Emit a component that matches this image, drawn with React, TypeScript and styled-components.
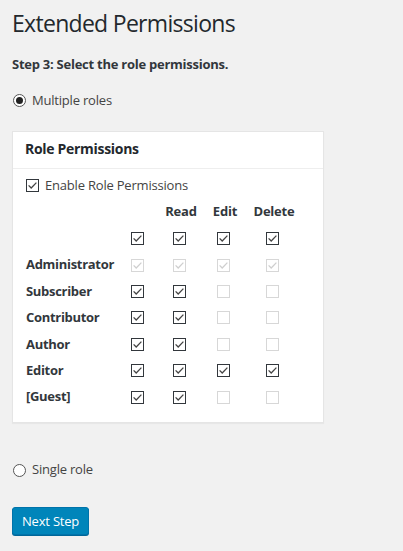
import styled, { createGlobalStyle } from 'styled-components';

const GlobalStyle = createGlobalStyle`
  body {
    margin: 0;
    background: #f1f1f1;
    font-family: "Open Sans", "Noto Sans", sans-serif;
    font-size: 13px;
    line-height: 1.5;
    letter-spacing: -0.2px;
    color: #444;
  }
`;

const Wrap = styled.div`
  padding: 0 12px 20px;
`;

const Title = styled.h1`
  margin: 0;
  padding: 9px 0 4px;
  font-size: 23px;
  line-height: 29px;
  font-weight: 400;
  letter-spacing: -0.7px;
  color: #23282d;
`;

const StepText = styled.p`
  margin: 13px 0 0;
  font-weight: 700;
  letter-spacing: -0.25px;
  color: #32373c;
`;

const RadioRow = styled.label<{ $top: number }>`
  display: flex;
  align-items: center;
  margin-top: ${p => p.$top}px;
  color: #444;
`;

const RadioDot = styled.span<{ $on?: boolean }>`
  box-sizing: border-box;
  width: 13px;
  height: 13px;
  margin: 0 6px 0 1px;
  border: 1px solid #555;
  border-radius: 50%;
  background: #fff;
  display: flex;
  align-items: center;
  justify-content: center;

  &::after {
    content: '';
    display: ${p => (p.$on ? 'block' : 'none')};
    width: 7px;
    height: 7px;
    border-radius: 50%;
    background: #222;
  }
`;

const Card = styled.div`
  box-sizing: border-box;
  width: 312px;
  margin-top: 21px;
  background: #fff;
  border: 1px solid #e5e5e5;
  box-shadow: 0 1px 1px rgba(0, 0, 0, 0.04);
`;

const CardHeader = styled.h2`
  margin: 0;
  padding: 7px 12px 9px;
  font-size: 14px;
  line-height: 1.4;
  font-weight: 700;
  letter-spacing: -0.3px;
  color: #23282d;
  border-bottom: 1px solid #eee;
`;

const CardBody = styled.div`
  padding: 7px 13px 12px;
`;

const EnableRow = styled.label`
  display: flex;
  align-items: center;
  gap: 2px;
  color: #444;
`;

const Grid = styled.div`
  display: grid;
  grid-template-columns: 96px 34px 50px 38px 60px;
  margin-top: 7px;
`;

const HeadCell = styled.div`
  padding-bottom: 4px;
  text-align: center;
  font-weight: 700;
  color: #32373c;
`;

const RoleName = styled.div`
  display: flex;
  align-items: center;
  height: 26.4px;
  font-weight: 700;
  letter-spacing: -0.3px;
  color: #32373c;
  margin-top: -3px;
  padding-top: 3px;
`;

const BoxCell = styled.div`
  display: flex;
  align-items: center;
  justify-content: center;
  height: 26.4px;
`;

const Box = styled.span<{ $checked: boolean; $disabled?: boolean }>`
  box-sizing: border-box;
  width: 13px;
  height: 13px;
  margin-right: 4px;
  background: #fff;
  border: 1px solid
    ${p => (p.$checked && !p.$disabled ? '#32373c' : '#d7d7d7')};
  display: flex;
  align-items: center;
  justify-content: center;
  color: ${p => (p.$disabled ? '#cfcfcf' : '#444')};

  svg {
    display: ${p => (p.$checked ? 'block' : 'none')};
  }
`;

const NextButton = styled.button`
  margin-top: 27px;
  height: 28px;
  padding: 0 9px 1px;
  font-family: inherit;
  font-size: 13px;
  line-height: 26px;
  letter-spacing: -0.2px;
  color: #fff;
  background: #0085ba;
  border: 1px solid #0073aa;
  border-radius: 3px;
  box-shadow: 0 1px 0 #006799;
  cursor: pointer;
`;

function Checkbox({ checked, disabled }: { checked: boolean; disabled?: boolean }) {
  return (
    <Box $checked={checked} $disabled={disabled}>
      <svg width="11" height="11" viewBox="0 0 11 11">
        <path d="M1.6 5.4 L4.2 8 L9.4 2.6" fill="none" stroke="currentColor" strokeWidth="1.3" />
      </svg>
    </Box>
  );
}

type Role = { name: string; perms: boolean[]; locked?: boolean };

const roles: Role[] = [
  { name: '', perms: [true, true, true, true] },
  { name: 'Administrator', perms: [true, true, true, true], locked: true },
  { name: 'Subscriber', perms: [true, true, false, false] },
  { name: 'Contributor', perms: [true, true, false, false] },
  { name: 'Author', perms: [true, true, false, false] },
  { name: 'Editor', perms: [true, true, true, true] },
  { name: '[Guest]', perms: [true, true, false, false] },
];

export default function App() {
  return (
    <>
      <GlobalStyle />
      <Wrap>
        <Title>Extended Permissions</Title>
        <StepText>Step 3: Select the role permissions.</StepText>
        <RadioRow $top={16}>
          <RadioDot $on />
          Multiple roles
        </RadioRow>

        <Card>
          <CardHeader>Role Permissions</CardHeader>
          <CardBody>
            <EnableRow>
              <Checkbox checked />
              Enable Role Permissions
            </EnableRow>
            <Grid>
              <HeadCell />
              <HeadCell />
              <HeadCell>Read</HeadCell>
              <HeadCell>Edit</HeadCell>
              <HeadCell>Delete</HeadCell>
              {roles.map(role => (
                <>
                  <RoleName key={role.name + '-n'}>{role.name}</RoleName>
                  {role.perms.map((on, i) => (
                    <BoxCell key={role.name + i}>
                      <Checkbox checked={on} disabled={role.locked} />
                    </BoxCell>
                  ))}
                </>
              ))}
            </Grid>
          </CardBody>
        </Card>

        <RadioRow $top={37}>
          <RadioDot />
          Single role
        </RadioRow>
        <NextButton>Next Step</NextButton>
      </Wrap>
    </>
  );
}
